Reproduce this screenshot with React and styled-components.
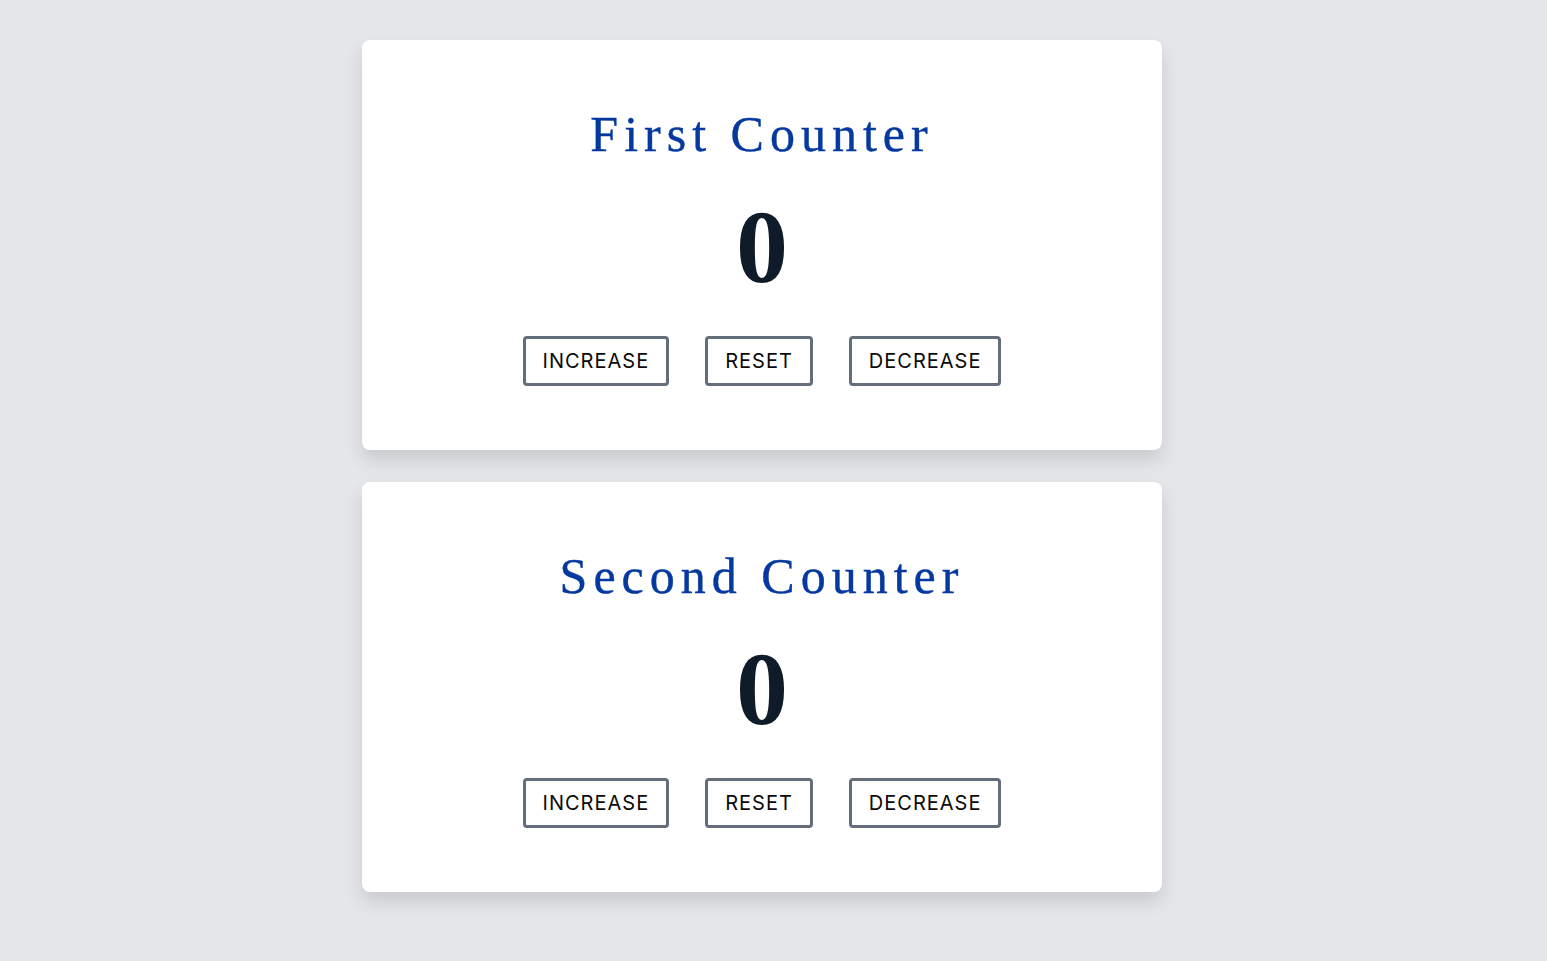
import React, { useState } from "react";
import styled, { createGlobalStyle } from "styled-components";

const Global = createGlobalStyle`
  html, body { margin: 0; padding: 0; }
  body {
    background: #e4e6ea;
    font-family: "Liberation Serif", serif;
  }
`;

const Page = styled.main`
  min-height: 100vh;
  display: flex;
  flex-direction: column;
  align-items: center;
  gap: 32px;
  padding: 40px 23px 40px 0;
  box-sizing: border-box;
`;

const Card = styled.section`
  width: 800px;
  height: 410px;
  box-sizing: border-box;
  background: #fff;
  border-radius: 8px;
  box-shadow: 0 10px 18px rgba(0, 0, 0, 0.12);
  display: flex;
  flex-direction: column;
  align-items: center;
  padding-top: 64px;
`;

const Title = styled.h2`
  margin: 0;
  font-family: "Liberation Serif", serif;
  font-weight: 400;
  font-size: 50px;
  line-height: 60px;
  letter-spacing: 6px;
  color: #0539a0;
  -webkit-text-stroke: 0.4px #0539a0;
`;

const Value = styled.div`
  margin-top: 28px;
  font-family: "Liberation Serif", serif;
  font-weight: 700;
  font-size: 104px;
  line-height: 110px;
  color: #0f1b28;
`;

const Buttons = styled.div`
  margin-top: 34px;
  display: flex;
  gap: 36px;
`;

const Button = styled.button`
  height: 50px;
  box-sizing: border-box;
  padding: 0 17px;
  background: #fff;
  border: 3px solid #636d7b;
  border-radius: 4px;
  font-family: "Inter", "Liberation Sans", sans-serif;
  font-size: 20px;
  letter-spacing: 1px;
  color: #0a0a0a;
  cursor: pointer;
`;

function Counter({ title }) {
  const [n, setN] = useState(0);
  return (
    <Card>
      <Title>{title}</Title>
      <Value>{n}</Value>
      <Buttons>
        <Button onClick={() => setN(n + 1)}>INCREASE</Button>
        <Button onClick={() => setN(0)}>RESET</Button>
        <Button onClick={() => setN(n - 1)}>DECREASE</Button>
      </Buttons>
    </Card>
  );
}

export default function App() {
  return (
    <>
      <Global />
      <Page>
        <Counter title="First Counter" />
        <Counter title="Second Counter" />
      </Page>
    </>
  );
}
